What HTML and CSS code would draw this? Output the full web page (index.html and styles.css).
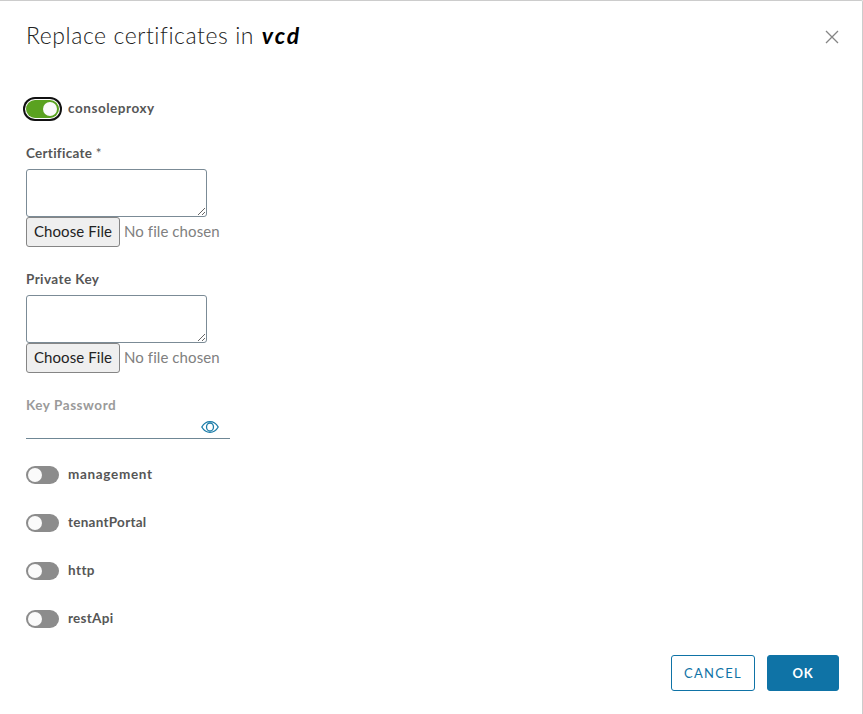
FILE: index.html
```html
<!DOCTYPE html>
<html lang="en">
<head>
<meta charset="utf-8">
<title>Replace certificates</title>
<link rel="stylesheet" href="styles.css">
</head>
<body>
<main class="modal">
  <header class="modal-header">
    <h1 class="modal-title"><span>Replace certificates in</span> <em>vcd</em></h1>
    <button class="close" aria-label="Close"><svg width="14" height="14" viewBox="0 0 14 14"><path d="M1 1 13 13M13 1 1 13"/></svg></button>
  </header>
  <form class="modal-body">
    <div class="toggle-row"><span class="switch on"></span><span class="label wide">consoleproxy</span></div>
    <div class="field">
      <span class="label">Certificate <span class="required">*</span></span>
      <textarea class="textarea"></textarea>
      <div class="file"><button type="button" class="file-button">Choose File</button><span class="file-name">No file chosen</span></div>
    </div>
    <div class="field">
      <span class="label medium">Private Key</span>
      <textarea class="textarea"></textarea>
      <div class="file"><button type="button" class="file-button">Choose File</button><span class="file-name">No file chosen</span></div>
    </div>
    <div class="field">
      <span class="label muted wide">Key Password</span>
      <div class="password"><input type="password" class="password-input"><svg class="eye" width="18" height="14" viewBox="0 0 18 14"><path d="M.8 7C2.8 3.500 5.700 1.600 9 1.600S15.200 3.500 17.200 7C15.200 10.500 12.300 12.400 9 12.400S2.800 10.500.8 7Z"/><ellipse cx="9" cy="7" rx="3.500" ry="4"/></svg></div>
    </div>
    <div class="toggle-row"><span class="switch"></span><span class="label wider">management</span></div>
    <div class="toggle-row"><span class="switch"></span><span class="label">tenantPortal</span></div>
    <div class="toggle-row"><span class="switch"></span><span class="label medium">http</span></div>
    <div class="toggle-row"><span class="switch"></span><span class="label">restApi</span></div>
  </form>
  <footer class="modal-footer">
    <button class="btn cancel">CANCEL</button>
    <button class="btn primary">OK</button>
  </footer>
</main>
</body>
</html>
```
FILE: styles.css
```css
* { box-sizing: border-box; }
body { margin: 0; background: #fff; font-family: Lato, "Open Sans", sans-serif; color: #565656; }
button { font-family: inherit; }
.modal { height: 714px; border-top: 1px solid #ccc; border-right: 1px solid #ccc; border-top-right-radius: 2px; overflow: hidden; }
.modal-header { height: 96px; padding: 19px 23px 0 26px; display: flex; justify-content: space-between; align-items: flex-start; }
.modal-title { margin: 0; font-size: 23px; line-height: 30px; font-weight: 300; letter-spacing: .56px; color: #222; white-space: nowrap; }
.modal-title em { font-weight: 700; color: #000; margin-left: 1px; letter-spacing: 1.8px; }
.close { display: flex; margin-top: 10px; padding: 0; border: 0; background: none; }
.close svg { stroke: #858585; stroke-width: 1.3; fill: none; }
.modal-body { padding-left: 26px; }
.toggle-row { display: flex; align-items: center; height: 24px; gap: 9px; }
.field + .toggle-row, .toggle-row + .toggle-row, .field { margin-top: 24px; }
.switch { width: 33px; height: 18px; padding: 2px; border-radius: 9px; background: #8c8c8c; display: flex; }
.switch::before { content: ""; width: 14px; height: 14px; border-radius: 50%; background: #fafafa; }
.switch.on { background: #5aa220; justify-content: flex-end; box-shadow: 0 0 0 1px #fff, 0 0 0 3px #111; }
.label { height: 18px; font-size: 13.5px; line-height: 16px; font-weight: 700; letter-spacing: .27px; white-space: nowrap; }
.label.medium { letter-spacing: .42px; }
.label.wide { letter-spacing: .55px; }
.label.wider { letter-spacing: .68px; }
.field { display: flex; flex-direction: column; align-items: flex-start; }
.required { font-weight: 400; }
.muted { color: #9a9a9a; }
.textarea { width: 181px; height: 48px; margin: 6px 0 0; border: 1px solid #7b8b96; border-radius: 3px; background: #fff; }
.file { display: flex; align-items: center; gap: 4px; height: 30px; }
.file-button { width: 94px; height: 30px; padding: 0 0 2px; border: 1px solid #858585; border-radius: 3px; background: #efefef; font-size: 15px; letter-spacing: .08px; color: #222; white-space: nowrap; }
.file-name { padding-bottom: 2px; font-size: 15px; letter-spacing: .08px; color: #808080; white-space: nowrap; }
.password { display: flex; align-items: center; width: 204px; height: 24px; border-bottom: 1px solid #6f8795; }
.password-input { width: 174px; height: 20px; border: 0; padding: 0; outline: 0; }
.eye { fill: none; stroke: #1b7ca8; stroke-width: 1.3; margin-left: 1px; }
.modal-footer { display: flex; justify-content: flex-end; gap: 12px; margin-top: 24px; padding-right: 23px; }
.btn { height: 36px; padding: 0; border: 1px solid #0f73a6; border-radius: 3px; font-size: 13px; letter-spacing: 1.3px; }
.cancel { width: 84px; color: #0f73a6; background: #fff; }
.primary { width: 72px; color: #fff; background: #0f73a6; font-weight: 700; letter-spacing: .8px; }
```
